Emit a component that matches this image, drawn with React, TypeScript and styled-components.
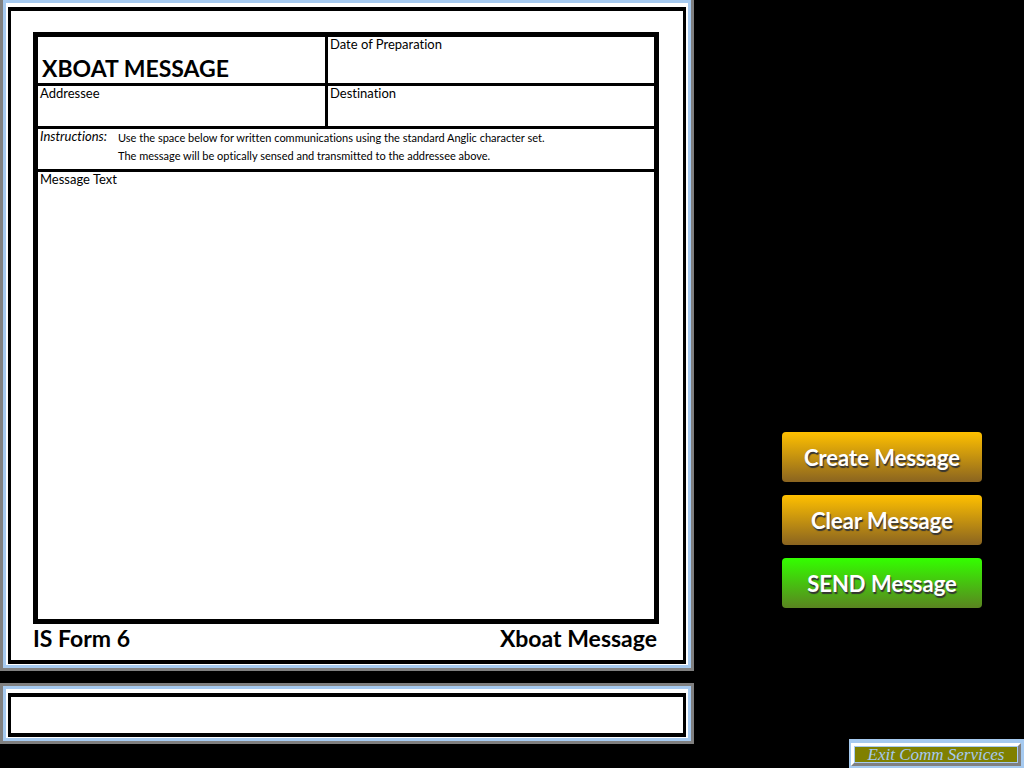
import React from "react";
import styled, { createGlobalStyle } from "styled-components";

const GlobalStyle = createGlobalStyle`
  *, *::before, *::after { box-sizing: border-box; }
  body {
    margin: 0;
    background: #000;
    color: #000;
    font-family: Lato, "Liberation Sans", sans-serif;
    font-variant-ligatures: none;
  }
`;

const Screen = styled.main`
  display: grid;
  grid-template-columns: minmax(0, 694fr) minmax(330px, 330fr);
  min-height: 100vh;
`;

const Terminal = styled.div`
  display: flex;
  flex-direction: column;
  gap: 12px;
  padding-bottom: 24px;
`;

const Bezel = styled.section<{ $grow?: boolean }>`
  display: flex;
  flex-direction: column;
  flex: ${(p) => (p.$grow ? "1 0 auto" : "none")};
  border: 3px solid #808080;
  border-top-width: ${(p) => (p.$grow ? "0" : "3px")};
`;

const Mat = styled.div`
  display: flex;
  flex-direction: column;
  flex: 1;
  padding: 4px 2px 1px;
  border: 3px solid #a6caf0;
  background: #fff;
`;

const Sheet = styled.form`
  display: flex;
  flex-direction: column;
  flex: 1;
  padding: 21px 24px 8px 22px;
  border: solid #000;
  border-width: 4px 3px;
`;

const FormGrid = styled.div`
  display: grid;
  grid-template-columns: 287fr 326fr;
  grid-template-rows: 46px 40px 40px 1fr;
  gap: 3px;
  flex: 1;
  border: 5px solid #000;
  background: #000;
`;

const Cell = styled.div<{ $wide?: boolean }>`
  display: flex;
  flex-direction: column;
  grid-column: ${(p) => (p.$wide ? "1 / -1" : "auto")};
  min-width: 0;
  padding: 0 2px;
  background: #fff;
`;

const Title = styled.h1`
  margin: auto 0 0 2px;
  font-size: 23px;
  line-height: 30px;
  font-weight: 700;
`;

const Label = styled.label`
  font-size: 13px;
  line-height: 15px;
`;

const Field = styled.input`
  flex: 1;
  width: 100%;
  min-height: 0;
  padding: 0;
  border: 0;
  outline: 0;
  background: transparent;
  font: inherit;
`;

const MessageArea = styled.textarea`
  flex: 1;
  min-height: 200px;
  padding: 0;
  border: 0;
  outline: 0;
  resize: none;
  background: transparent;
  font: inherit;
`;

const Instructions = styled.div`
  display: grid;
  grid-template-columns: 78px 1fr;
`;

const InstructionsHeading = styled.em`
  font-size: 13px;
  line-height: 15px;
`;

const InstructionsText = styled.p`
  margin: 0;
  font-size: 11px;
  line-height: 18px;
`;

const Footer = styled.footer`
  display: flex;
  justify-content: space-between;
  padding-right: 2px;
  font-size: 23px;
  line-height: 28px;
  font-weight: 700;
`;

const StatusField = styled.input`
  width: 100%;
  height: 44px;
  padding: 0 8px;
  border: solid #000;
  border-width: 4px 3px;
  border-radius: 0;
  outline: 0;
  background: #fff;
  font: inherit;
`;

const Controls = styled.aside`
  display: flex;
  flex-direction: column;
  align-items: flex-end;
  justify-content: flex-end;
  gap: 131px;
`;

const Actions = styled.div`
  display: flex;
  flex-direction: column;
  gap: 13px;
  margin-right: 42px;
`;

const ActionButton = styled.button<{ $from: string; $to: string }>`
  width: 200px;
  height: 50px;
  padding: 0;
  border: 0;
  border-radius: 4px;
  background: linear-gradient(${(p) => p.$from}, ${(p) => p.$to});
  color: #fff;
  font-family: Lato, "Liberation Sans", sans-serif;
  font-size: 22px;
  font-weight: 700;
  text-shadow: 1px 2px 1px #333;
`;

const ExitButton = styled.button`
  width: 175px;
  padding: 4px 3px 2px 2px;
  border: 0;
  background: #a6caf0;
`;

const ExitFace = styled.span`
  display: block;
  border: 3px solid;
  border-color: #fff #808080 #808080 #fff;
  background: #808000;
  box-shadow: inset 0 0 0 1px #a6caf0;
  color: #a6caf0;
  font-family: "Liberation Serif", serif;
  font-size: 17px;
  line-height: 17px;
  font-style: italic;
`;

export default function App() {
  return (
    <>
      <GlobalStyle />
      <Screen>
        <Terminal>
          <Bezel $grow>
            <Mat>
              <Sheet id="xboat">
                <FormGrid>
                  <Cell>
                    <Title>XBOAT MESSAGE</Title>
                  </Cell>
                  <Cell>
                    <Label htmlFor="date">Date of Preparation</Label>
                    <Field id="date" />
                  </Cell>
                  <Cell>
                    <Label htmlFor="addressee">Addressee</Label>
                    <Field id="addressee" />
                  </Cell>
                  <Cell>
                    <Label htmlFor="destination">Destination</Label>
                    <Field id="destination" />
                  </Cell>
                  <Cell $wide>
                    <Instructions>
                      <InstructionsHeading>Instructions:</InstructionsHeading>
                      <InstructionsText>
                        Use the space below for written communications using the standard Anglic character set.
                        <br />
                        The message will be optically sensed and transmitted to the addressee above.
                      </InstructionsText>
                    </Instructions>
                  </Cell>
                  <Cell $wide>
                    <Label htmlFor="message">Message Text</Label>
                    <MessageArea id="message" />
                  </Cell>
                </FormGrid>
                <Footer>
                  <span>IS Form 6</span>
                  <span>Xboat Message</span>
                </Footer>
              </Sheet>
            </Mat>
          </Bezel>
          <Bezel>
            <Mat>
              <StatusField aria-label="Status" readOnly />
            </Mat>
          </Bezel>
        </Terminal>
        <Controls>
          <Actions>
            <ActionButton type="button" $from="#ffc000" $to="#8a6420">Create Message</ActionButton>
            <ActionButton type="reset" form="xboat" $from="#ffc000" $to="#8a6420">Clear Message</ActionButton>
            <ActionButton type="button" $from="#33ff00" $to="#5a8420">SEND Message</ActionButton>
          </Actions>
          <ExitButton type="button">
            <ExitFace>Exit Comm Services</ExitFace>
          </ExitButton>
        </Controls>
      </Screen>
    </>
  );
}
